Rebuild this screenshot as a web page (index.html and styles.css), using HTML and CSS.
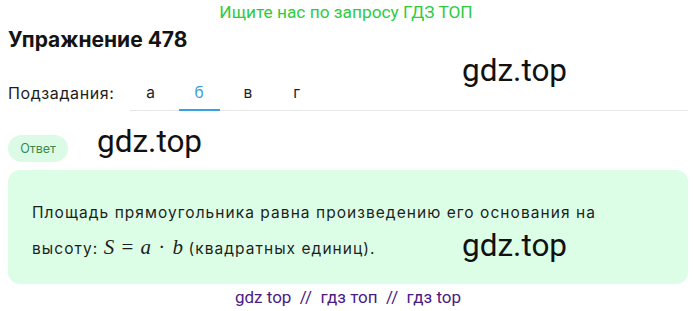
FILE: index.html
```html
<!DOCTYPE html>
<html lang="ru">
<head>
<meta charset="utf-8">
<link rel="stylesheet" href="styles.css">
</head>
<body>
<div class="page">
  <div class="promo">Ищите нас по запросу ГДЗ ТОП</div>
  <h1 class="title">Упражнение 478</h1>
  <div class="subtasks">
    <span class="subtasks-label">Подзадания:</span>
    <div class="tabs">
      <span class="tab">а</span>
      <span class="tab active">б</span>
      <span class="tab">в</span>
      <span class="tab">г</span>
    </div>
  </div>
  <div class="answer-head"><span class="pill">Ответ</span></div>
  <div class="answer">
    <p>Площадь прямоугольника равна произведению его основания на высоту: <span class="math"><i>S</i> = <i>a</i> · <i>b</i></span> (квадратных единиц).</p>
  </div>
  <div class="footer">gdz top &nbsp;// &nbsp;гдз топ &nbsp;// &nbsp;гдз top</div>
  <span class="wm wm1">gdz.top</span>
  <span class="wm wm2">gdz.top</span>
  <span class="wm wm3">gdz.top</span>
</div>
</body>
</html>
```
FILE: styles.css
```css
* { box-sizing: border-box; }
html, body { margin: 0; padding: 0; background: #fff; }
body { font-family: Inter, "Noto Sans", sans-serif; color: #1a1a1a; }
.page { position: relative; padding: 0 7px 0 8px; }
.promo {
  font-family: Roboto, sans-serif;
  font-size: 17.3px;
  line-height: 24px;
  color: #2fcb3f;
  text-align: center;
  padding-right: 4px;
}
.title {
  margin: 3px 0 0;
  font-size: 21px;
  line-height: 26px;
  font-weight: 700;
  color: #141414;
}
.subtasks {
  display: flex;
  align-items: stretch;
  margin-top: 23px;
}
.subtasks-label {
  font-size: 16px;
  letter-spacing: 0.6px;
  line-height: 34px;
  width: 122px;
  color: #1d1d1d;
}
.tabs {
  flex: 1;
  display: flex;
  gap: 7.7px;
  border-bottom: 1px solid #e6e6e6;
}
.tab {
  width: 41px;
  text-align: center;
  font-size: 15.5px;
  line-height: 33px;
  color: #222;
  border-bottom: 2px solid transparent;
  margin-bottom: -1px;
}
.tab.active { color: #3a9bd8; border-bottom-color: #36a2e0; }
.answer-head { margin-top: 24px; height: 27px; }
.pill {
  display: inline-block;
  height: 27px;
  width: 60px;
  line-height: 27px;
  text-align: center;
  border-radius: 14px;
  background: #dcfbe6;
  color: #3a8a4f;
  font-size: 12.5px;
}
.answer {
  margin-top: 8px;
  background: #dcfee7;
  border-radius: 12px;
  padding: 25px 60px 24px 24px;
  height: 114px;
}
.answer p {
  margin: 0;
  font-size: 15.5px;
  letter-spacing: 1.05px;
  line-height: 35px;
  color: #1e1e1e;
}
.math {
  font-family: "Liberation Serif", "DejaVu Serif", serif;
  font-size: 21px;
  letter-spacing: 0;
  word-spacing: 2px;
}
.math i { font-style: italic; }
.footer {
  font-family: Roboto, sans-serif;
  font-size: 17px;
  line-height: 27px;
  color: #4b1a84;
  text-align: center;
}
.wm {
  position: absolute;
  font-family: Roboto, sans-serif;
  font-size: 31.5px;
  line-height: 36px;
  color: #111;
}
.wm1 { left: 462px; top: 53px; }
.wm2 { left: 97px; top: 124px; }
.wm3 { left: 462px; top: 228px; }
```
